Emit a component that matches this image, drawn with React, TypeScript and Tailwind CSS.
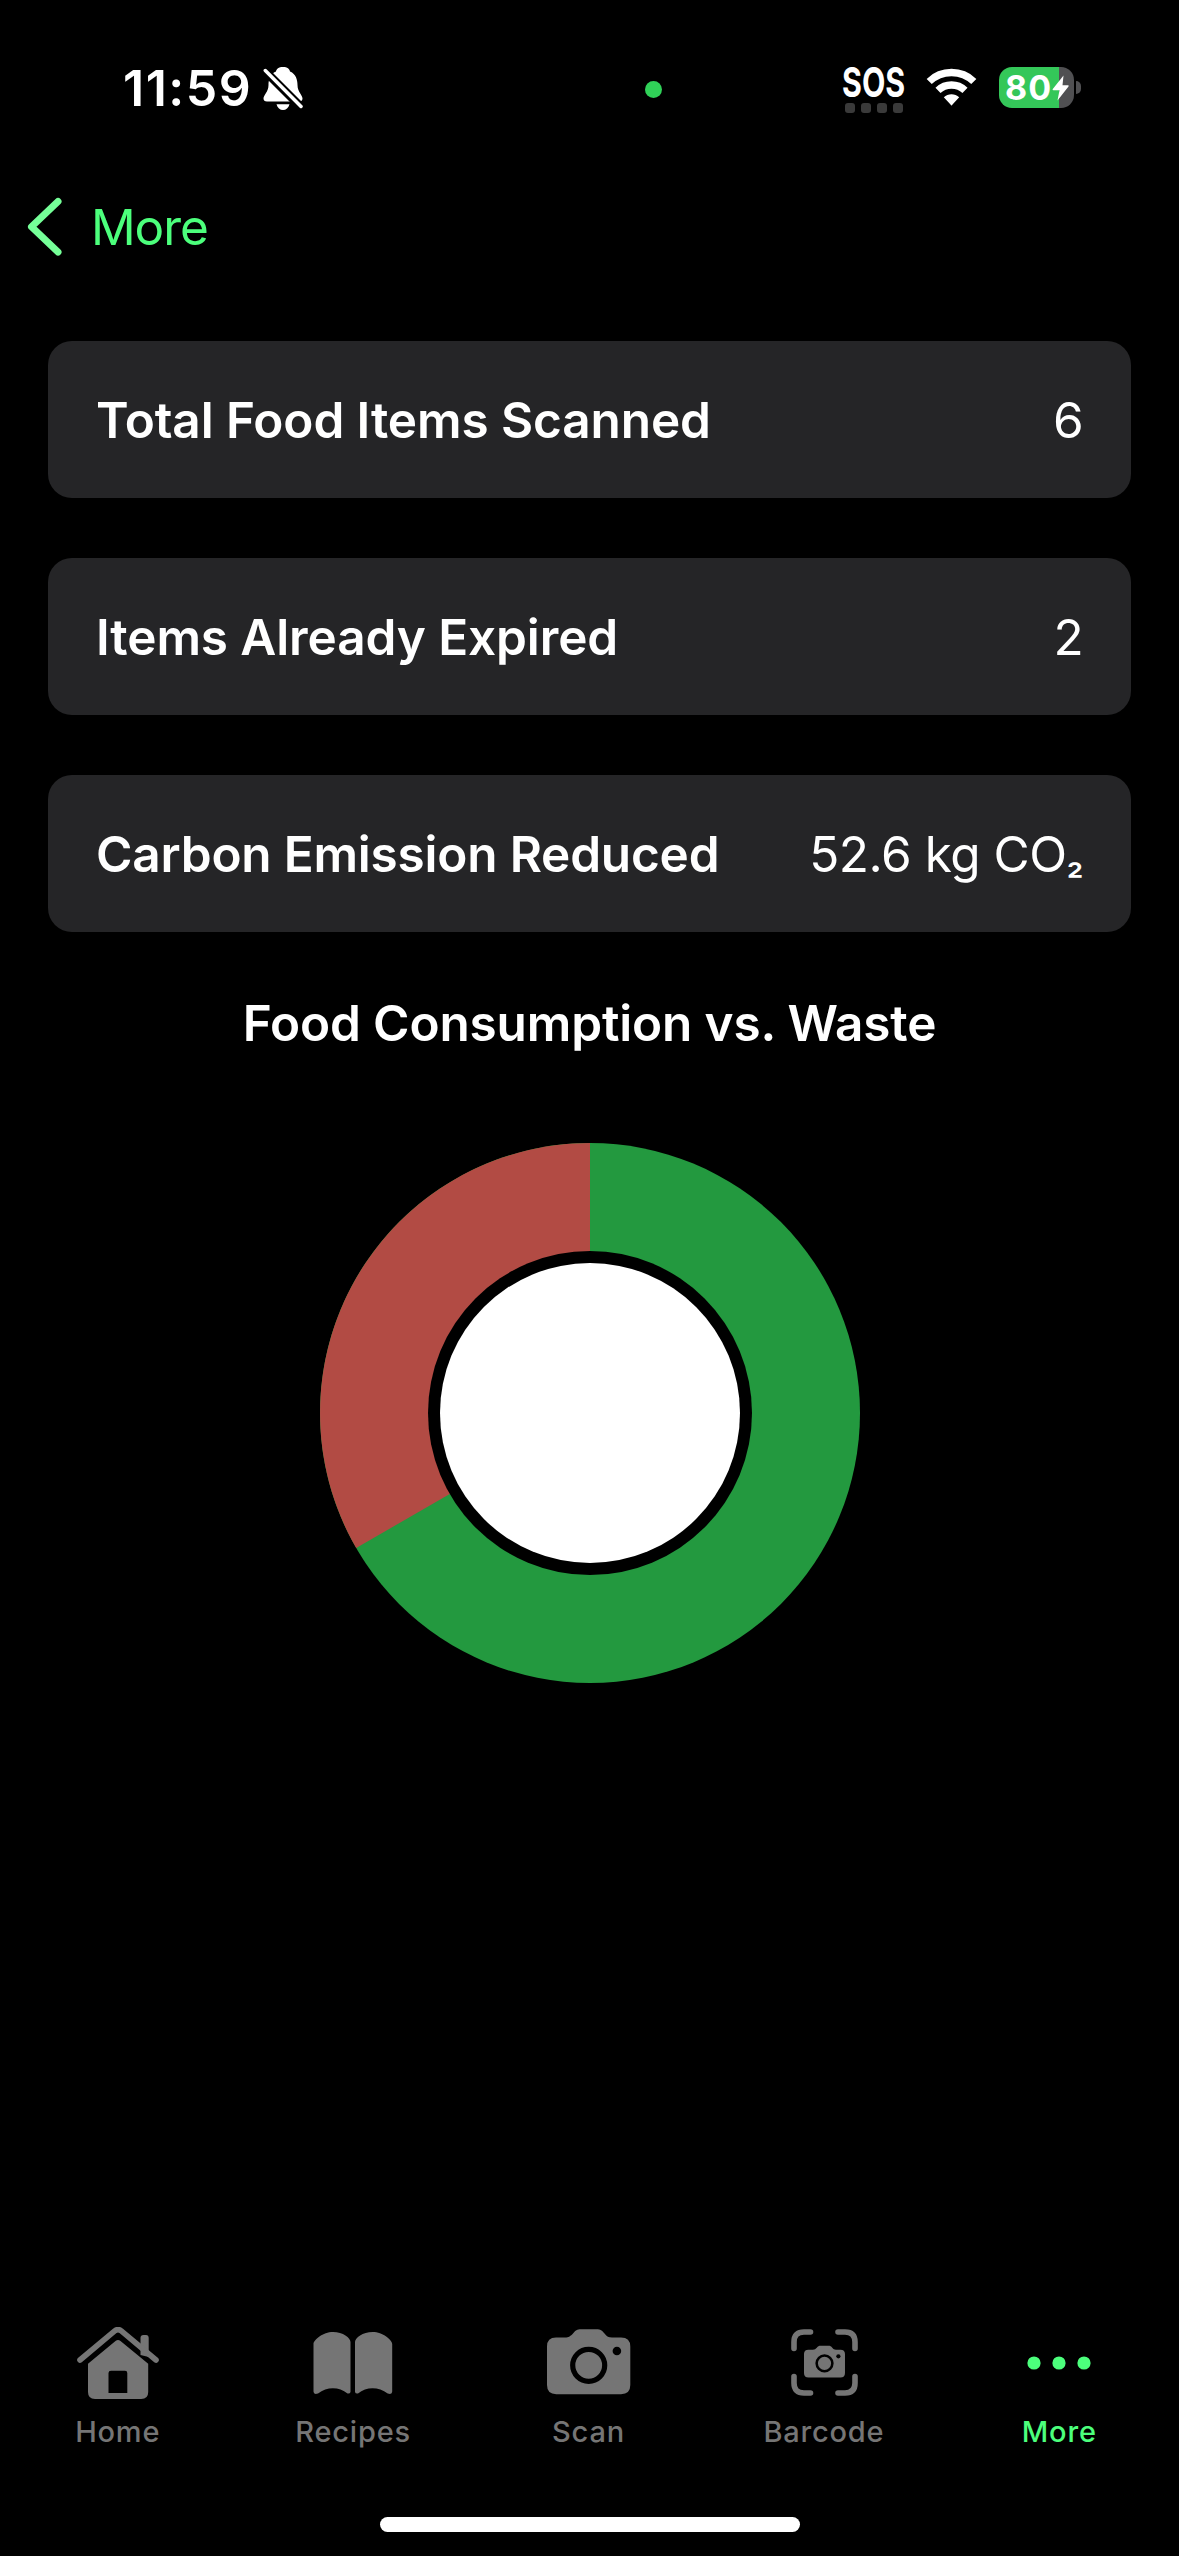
import type { ReactNode } from "react";

interface StatProps {
  label: string;
  value: ReactNode;
  labelClass: string;
  valueClass: string;
}

const StatCard = ({ label, value, labelClass, valueClass }: StatProps) => (
  <div className="flex h-[157px] items-center justify-between rounded-[24px] bg-[#252527] px-[48px] text-[49.5px] leading-[60px] text-white">
    <span className={`font-semibold whitespace-nowrap ${labelClass}`}>{label}</span>
    <span className={`whitespace-nowrap ${valueClass}`}>{value}</span>
  </div>
);

const CAMERA_BODY =
  "M9 8.5H18C22 8.500 23.500 7 26 4.500C28.500 1.500 30 .3 34 .3H49.500C53.500 .3 55 1.500 57.500 4.500C60 7.500 61.500 8.500 65 8.500H74Q83.300 8.500 83.300 17.500V56Q83.300 65.200 74 65.200H9.300Q0 65.200 0 56V17.500Q0 8.500 9 8.500Z";

const CameraShape = () => (
  <>
    <path d={CAMERA_BODY} fill="currentColor" />
    <circle cx="41.700" cy="36.300" r="16" fill="none" stroke="#000" strokeWidth="5.200" />
    <circle cx="69.900" cy="22" r="4.300" fill="#000" />
  </>
);

const HomeIcon = () => (
  <svg width="82" height="72" viewBox="0 0 82 72" fill="none">
    <path d="M63.500 28V11Q63.500 8 66.500 8H69Q71.700 8 71.700 11V30Z" fill="currentColor" />
    <path d="M3 33L38 3.700Q41 1.500 44 3.700L79 33" stroke="currentColor" strokeWidth="5.600" strokeLinecap="round" />
    <path
      fillRule="evenodd"
      d="M11 36.800L38.500 14Q41 12 43.500 14L71.200 36.800V65Q71.200 72 64.200 72H18Q11 72 11 65ZM31.500 46V66H50.300V46Q50.300 43.700 48 43.700H34Q31.500 43.700 31.500 46Z"
      fill="currentColor"
    />
  </svg>
);

const BookIcon = () => (
  <svg width="80" height="62" viewBox="0 0 80 62" fill="currentColor">
    <path d="M.5 12C.5 8 10 0 20 0C30 0 37.500 6 37.500 10V60Q37 62 34.500 61.500C26 54.500 14 54.500 5 61.500Q.5 63 .5 59.500Z" />
    <path d="M79.200 12C79.200 8 69.700 0 59.700 0C49.700 0 42 6 42 10V60Q42.500 62 45 61.500C53.500 54.500 65.500 54.500 74.700 61.500Q79.200 63 79.200 59.500Z" />
  </svg>
);

const CameraIcon = () => (
  <svg width="84" height="66" viewBox="0 0 84 66">
    <CameraShape />
  </svg>
);

const BarcodeIcon = () => (
  <svg width="67" height="67" viewBox="0 0 67 67" fill="none">
    <path
      d="M3 19.500V13Q3 3 13 3H19.500M47 3H54Q64 3 64 13V19.500M64 47.500V54Q64 64 54 64H47M19.500 64H13Q3 64 3 54V47.500"
      stroke="currentColor"
      strokeWidth="5.600"
      strokeLinecap="round"
    />
    <g transform="translate(13 16.500) scale(.492)">
      <CameraShape />
    </g>
  </svg>
);

const MoreIcon = () => (
  <svg width="64" height="14" viewBox="0 0 64 14" fill="currentColor">
    <circle cx="7" cy="7" r="6.600" />
    <circle cx="32" cy="7" r="6.600" />
    <circle cx="57" cy="7" r="6.600" />
  </svg>
);

const tabs = [
  { name: "Home", icon: <HomeIcon />, offset: "pt-[17px]" },
  { name: "Recipes", icon: <BookIcon />, offset: "pt-[22px]" },
  { name: "Scan", icon: <CameraIcon />, offset: "pt-[19px] pl-px" },
  { name: "Barcode", icon: <BarcodeIcon />, offset: "pt-[19px] pl-px" },
  { name: "More", icon: <MoreIcon />, offset: "pt-[46px]" },
];

const StatusBar = () => (
  <header className="flex h-[176px] items-start text-white">
    <div className="ml-[123px] flex w-[522px] items-start pt-[58px]">
      <span className="w-[140px] whitespace-nowrap text-[50px] leading-[60px] font-semibold tracking-[1.5px]">
        11:59
      </span>
      <svg className="mt-[9px]" width="41" height="44" viewBox="0 0 41 44">
        <path
          d="M20 0C24.500 0 26.500 2 27 4.500C33 7 34.500 13 34.500 18C34.500 25 39.500 28 39.500 31.500Q39.500 34.500 36 34.500H4Q.5 34.500 .5 31.500C.5 28 5.500 25 5.500 18C5.500 13 7 7 13 4.500C13.500 2 15.500 0 20 0Z"
          fill="white"
        />
        <path d="M13.500 37.200H26.500C25.500 41 23 43 20 43S14.500 41 13.500 37.200Z" fill="white" />
        <path d="M-1 1L41 43" stroke="black" strokeWidth="8.500" />
        <path d="M2.300 3.500L38 39.500" stroke="white" strokeWidth="3.500" strokeLinecap="round" />
      </svg>
    </div>
    <div className="mt-[81px] size-[17px] rounded-full bg-[#30d158]" />
    <div className="ml-[181px] flex w-[62px] flex-col items-center pt-[62px]">
      <span className="origin-center scale-x-[0.74] text-[41px] leading-[41px] font-bold">SOS</span>
      <div className="flex gap-[6px]">
        {[0, 1, 2, 3].map((dot) => (
          <i key={dot} className="size-[10px] rounded-[3px] bg-[#3a3a3a]" />
        ))}
      </div>
    </div>
    <svg className="mt-[68px] ml-[21px]" width="51" height="39" viewBox="0 0 51 39" fill="none">
      <path d="M3.200 13.500C15.500 1.500 35.500 1.500 47.800 13.500" stroke="white" strokeWidth="7.300" />
      <path d="M12 22.400C19.500 15.200 31.500 15.200 39 22.400" stroke="white" strokeWidth="7.300" />
      <path d="M17.800 29.300C22 25.300 29 25.300 33.200 29.300L26.500 36.500Q25.500 38.300 24.500 36.500Z" fill="white" />
    </svg>
    <div className="mt-[67px] ml-[22px] flex items-center gap-[2px]">
      <div className="flex h-[41px] w-[75px] items-center rounded-[13px] bg-linear-to-r from-[#34c759] from-80% to-[#505052] to-80% pl-[6px]">
        <span className="w-[47px] text-[34px] leading-[41px] font-bold tracking-[1px]">80</span>
        <svg width="18" height="26" viewBox="0 0 18 26">
          <path d="M11.500 .5L.8 14Q0 15.200 1.500 15.200H7.500L5.500 25.500L16.500 11.500Q17.300 10.300 15.800 10.300H10.500Z" fill="white" />
        </svg>
      </div>
      <div className="h-[13px] w-[5px] rounded-r-full bg-[#505052]" />
    </div>
  </header>
);

const FoodChart = () => (
  <svg className="mt-[89px] ml-[319px]" width="542" height="542" viewBox="-271 -271 542 542">
    <circle r="270" fill="#23993f" />
    <path d="M0 0V-270A270 270 0 0 0 -233.800 135Z" fill="#b24b44" />
    <circle r="162" fill="black" />
    <circle r="150" fill="white" />
  </svg>
);

const carbonValue = (
  <>
    52.6 kg CO<span className="text-[38px] leading-none font-medium">₂</span>
  </>
);

export default function App() {
  return (
    <div className="flex h-[2556px] w-[1179px] flex-col overflow-hidden bg-black font-['Inter',sans-serif]">
      <StatusBar />
      <nav className="flex h-[165px] items-start pl-[27px] text-[#4cff7c]">
        <svg className="mt-[21px]" width="36" height="60" viewBox="0 0 36 60" fill="none">
          <path d="M31 4.500L4.500 29.800L31 55" stroke="#75ff98" strokeWidth="7" strokeLinecap="round" strokeLinejoin="round" />
        </svg>
        <span className="mt-[21px] ml-[28px] text-[49.500px] leading-[60px] tracking-[-1.1px]">More</span>
      </nav>
      <main className="flex grow flex-col">
        <section className="flex flex-col gap-[60px] px-[48px]">
          <StatCard label="Total Food Items Scanned" value="6" labelClass="tracking-[-0.1px]" valueClass="tracking-[-0.6px]" />
          <StatCard label="Items Already Expired" value="2" labelClass="tracking-[-0.1px]" valueClass="tracking-[-0.6px]" />
          <StatCard label="Carbon Emission Reduced" value={carbonValue} labelClass="tracking-[-0.2px]" valueClass="tracking-[-0.5px]" />
        </section>
        <h2 className="mt-[61px] text-center text-[49.5px] leading-[60px] font-semibold tracking-[-0.15px] whitespace-nowrap text-white">
          Food Consumption vs. Waste
        </h2>
        <FoodChart />
      </main>
      <footer className="flex h-[246px] flex-col items-center">
        <div className="grid h-[207px] w-[1177px] grid-cols-5 self-start">
          {tabs.map(({ name, icon, offset }) => (
            <div key={name} className={`flex flex-col items-center ${name === "More" ? "text-[#4cff7c]" : "text-[#757575]"}`}>
              <div className={`flex h-[104px] items-start ${offset}`}>{icon}</div>
              <span className="text-[29px] leading-[36px] font-medium tracking-[0.8px]">{name}</span>
            </div>
          ))}
        </div>
        <div className="h-[15px] w-[420px] rounded-full bg-white" />
      </footer>
    </div>
  );
}
